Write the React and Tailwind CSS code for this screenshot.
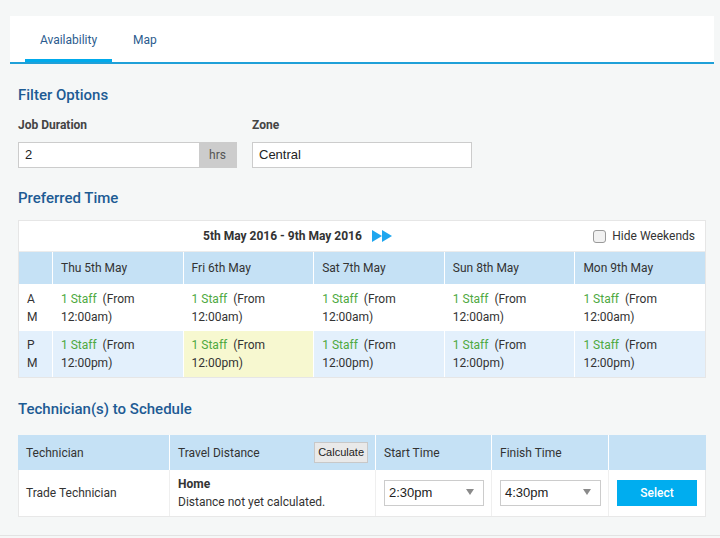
export default function App() {
  const days = ["Thu 5th May", "Fri 6th May", "Sat 7th May", "Sun 8th May", "Mon 9th May"];
  const staff = "text-[#4ea93f]";
  const Arrow = () => (
    <svg width="8" height="6" viewBox="0 0 8 6"><path d="M0 0 L8 0 L4 6 Z" fill="#8a8a8a" /></svg>
  );
  return (
    <div className="h-[538px] bg-[#f5f7f7] font-[Roboto,sans-serif] text-[#333] pt-4 overflow-hidden">
      <div className="ml-[10px] w-[704px]">
        {/* Tabs */}
        <div className="bg-white h-[48px] border-b-2 border-[#1fa0d8] flex pl-[15px] gap-[5px]">
          <div className="h-full w-[87px] flex items-center justify-center pt-[4px] text-[12px] text-[#2b5c8e] border-b-[3px] border-[#00aaeb]">
            Availability
          </div>
          <div className="h-full px-4 flex items-center justify-center pt-[4px] text-[12px] text-[#2b5c8e] border-b-[3px] border-transparent">
            Map
          </div>
        </div>

        <div className="px-2">
          <div className="mt-[21px] text-[15px] leading-[20px] font-medium text-[#1d5b94]">Filter Options</div>

          <div className="mt-[12px] flex gap-[15px]">
            <div className="w-[219px]">
              <div className="text-[12px] leading-[16px] font-bold text-[#444]">Job Duration</div>
              <div className="mt-[9px] h-[26px] flex border border-[#cccccc] bg-white">
                <div className="flex-1 flex items-center pl-[6px] text-[13px] text-[#222] font-['Liberation_Sans',Arial,sans-serif]">2</div>
                <div className="w-[37px] bg-[#cccccc] flex items-center justify-center text-[12px] text-[#555]">hrs</div>
              </div>
            </div>
            <div className="w-[220px]">
              <div className="text-[12px] leading-[16px] font-bold text-[#444]">Zone</div>
              <div className="mt-[9px] h-[26px] flex items-center border border-[#cccccc] bg-white pl-[6px] text-[13px] text-[#222] font-['Liberation_Sans',Arial,sans-serif]">
                Central
              </div>
            </div>
          </div>

          <div className="mt-[20px] text-[15px] leading-[20px] font-medium text-[#1d5b94]">Preferred Time</div>

          {/* Calendar */}
          <div className="mt-[12px] border border-[#e6e6e6] bg-white">
            <div className="h-[30px] flex items-center">
              <div className="pl-[184px] flex items-center gap-[10px]">
                <span className="text-[12px] font-bold text-[#333]">5th May 2016 - 9th May 2016</span>
                <svg width="20" height="12" viewBox="0 0 20 12">
                  <path d="M0 0 L10 6 L0 12 Z" fill="#1ea6ef" />
                  <path d="M10 0 L20 6 L10 12 Z" fill="#1ea6ef" />
                </svg>
              </div>
              <div className="ml-auto mr-[10px] flex items-center gap-[6px]">
                <div className="w-[13px] h-[13px] rounded-[3px] border border-[#9a9a9a] bg-[#f1f1f1]" />
                <span className="text-[12px] text-[#333]">Hide Weekends</span>
              </div>
            </div>
            <div className="grid grid-cols-[33px_repeat(5,1fr)] gap-px bg-white border-t border-[#ececec]">
              <div className="h-[32px] bg-[#c5e1f5]" />
              {days.map((d) => (
                <div key={d} className="h-[32px] bg-[#c5e1f5] px-2 flex items-center text-[12px] text-[#333]">{d}</div>
              ))}
              <div className="h-[45px] bg-white pl-2 pt-[5px] text-[12px] leading-[18px]">A<br />M</div>
              {days.map((d) => (
                <div key={d + "am"} className="h-[45px] bg-white px-2 pt-[5px] text-[12px] leading-[18px]">
                  <span className={staff}>1 Staff</span>&nbsp; (From<br />12:00am)
                </div>
              ))}
              <div className="h-[46px] bg-[#e3f0fc] pl-2 pt-[5px] text-[12px] leading-[18px]">P<br />M</div>
              {days.map((d, i) => (
                <div key={d + "pm"} className={(i === 1 ? "bg-[#f7f8d0]" : "bg-[#e3f0fc]") + " h-[46px] px-2 pt-[5px] text-[12px] leading-[18px]"}>
                  <span className={staff}>1 Staff</span>&nbsp; (From<br />12:00pm)
                </div>
              ))}
            </div>
          </div>

          <div className="mt-[21px] text-[15px] leading-[20px] font-medium text-[#1d5b94]">Technician(s) to Schedule</div>

          {/* Technicians table */}
          <div className="mt-[16px]">
            <div className="grid grid-cols-[151px_205px_115px_116px_1fr] gap-px bg-white h-[35px]">
              <div className="bg-[#c5e1f5] px-2 flex items-center text-[12px]">Technician</div>
              <div className="bg-[#c5e1f5] px-2 flex items-center text-[12px]">
                Travel Distance
                <div className="ml-auto mr-[-1px] h-[21px] px-[3px] flex items-center bg-[#e9e9e9] border border-[#c8c8c8] text-[11px] text-[#222] font-['Liberation_Sans',Arial,sans-serif]">
                  Calculate
                </div>
              </div>
              <div className="bg-[#c5e1f5] px-2 flex items-center text-[12px]">Start Time</div>
              <div className="bg-[#c5e1f5] px-2 flex items-center text-[12px]">Finish Time</div>
              <div className="bg-[#c5e1f5]" />
            </div>
            <div className="grid grid-cols-[150px_205px_115px_116px_1fr] gap-px bg-[#efefef] h-[47px] border border-t-0 border-[#e8e8e8]">
              <div className="bg-white pl-[7px] flex items-center text-[12px]">Trade Technician</div>
              <div className="bg-white px-2 flex flex-col justify-center text-[12px] leading-[18px]">
                <span className="font-bold">Home</span>
                <span>Distance not yet calculated.</span>
              </div>
              <div className="bg-white pl-2 flex items-center">
                <div className="w-[100px] h-[26px] border border-[#cccccc] flex items-center pl-[4px] pr-[9px] text-[13px] text-[#222] font-['Liberation_Sans',Arial,sans-serif]">
                  <span>2:30pm</span>
                  <span className="ml-auto mb-[3px]"><Arrow /></span>
                </div>
              </div>
              <div className="bg-white pl-2 flex items-center">
                <div className="w-[101px] h-[26px] border border-[#cccccc] flex items-center pl-[4px] pr-[9px] text-[13px] text-[#222] font-['Liberation_Sans',Arial,sans-serif]">
                  <span>4:30pm</span>
                  <span className="ml-auto mb-[3px]"><Arrow /></span>
                </div>
              </div>
              <div className="bg-white pl-2 flex items-center">
                <div className="w-[80px] h-[26px] bg-[#00adef] flex items-center justify-center text-white text-[12px] font-medium">Select</div>
              </div>
            </div>
          </div>
        </div>
      </div>
      <div className="mt-[18px] border-t border-[#e3e3e3]" />
    </div>
  );
}
